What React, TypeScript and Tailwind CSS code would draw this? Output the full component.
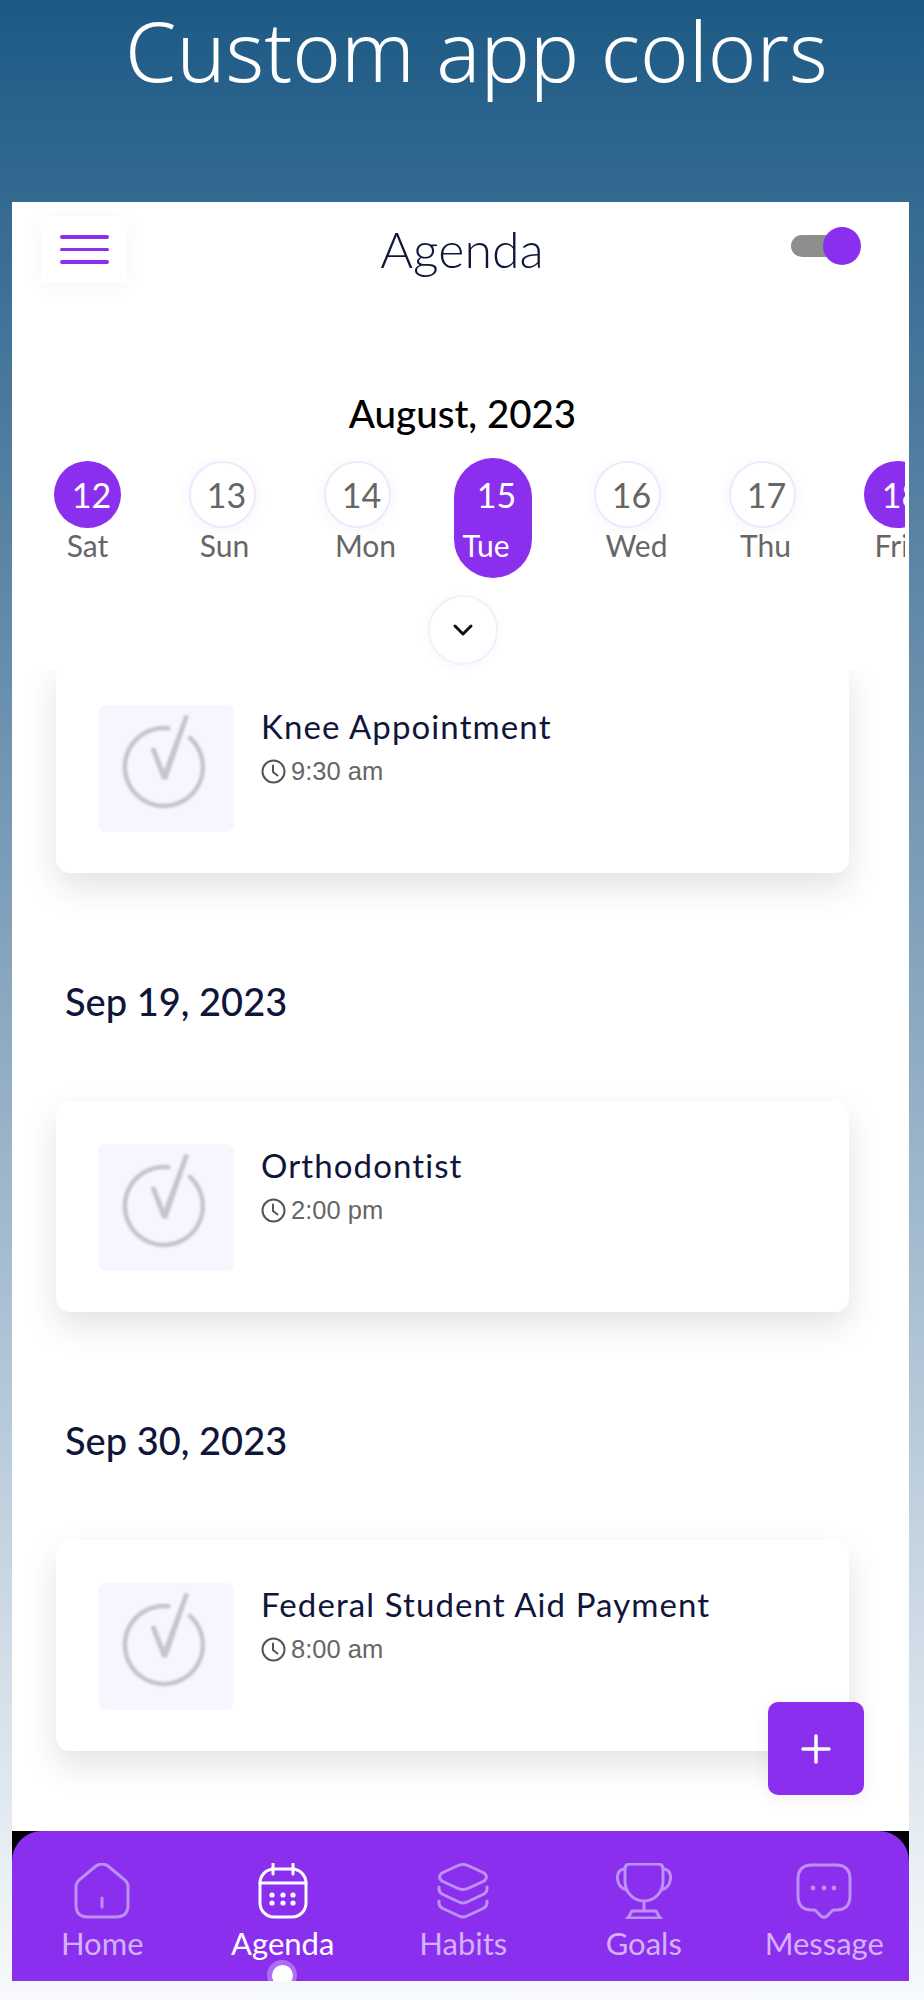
const days = [
  { num: "12", label: "Sat", filled: true, labelClass: "pl-0" },
  { num: "13", label: "Sun", filled: false, labelClass: "pl-[4px]" },
  { num: "14", label: "Mon", filled: false, labelClass: "pl-[16px]" },
  { num: "15", label: "Tue", filled: true, pill: true, labelClass: "pr-[13px]" },
  { num: "16", label: "Wed", filled: false, labelClass: "pl-[18px]" },
  { num: "17", label: "Thu", filled: false, labelClass: "pl-[6px]" },
  { num: "18", label: "Fri", filled: true, labelClass: "pr-[12px]" },
];

const agenda = [
  { title: "Orthodontist", time: "2:00 pm", date: "Sep 19, 2023" },
  { title: "Federal Student Aid Payment", time: "8:00 am", date: "Sep 30, 2023" },
];

function TaskIcon() {
  return (
    <div className="h-[127px] w-[136px] shrink-0 rounded-[8px] bg-[#f9f5fe] pl-[1px]">
      <svg width="134" height="127" viewBox="0 0 134 127" fill="none" className="blur-[0.8px]">
        <path d="M69.3 23.2A39 39 0 1 0 91 33" stroke="#c4c5cf" strokeWidth="4.500" strokeLinecap="round" />
        <path d="M54.5 45 65 72" stroke="#c4c5cf" strokeWidth="5" strokeLinecap="round" />
        <path d="M62 73 85.5 10 90 11 68 75Z" fill="#c4c5cf" />
      </svg>
    </div>
  );
}

function ClockIcon() {
  return (
    <svg width="25" height="25" viewBox="0 0 25 25" fill="none" stroke="#555" strokeWidth="2" strokeLinecap="round" className="shrink-0">
      <circle cx="12.5" cy="12.5" r="11" />
      <path d="M12 6.5V13l4.5 3.5" />
    </svg>
  );
}

function TaskCard({ title, time, className = "" }: { title: string; time: string; className?: string }) {
  return (
    <div className={`flex h-[211px] w-[793px] gap-[27px] rounded-[14px] bg-white pl-[42px] pt-[43px] shadow-[0_14px_32px_rgba(40,40,60,0.13)] ${className}`}>
      <TaskIcon />
      <div>
        <div className="-mt-[1px] font-['Lato',sans-serif] text-[33px] leading-[44px] tracking-[1.100px] text-[#10163a]">{title}</div>
        <div className="mt-[8px] flex items-center gap-[5px] font-['Liberation_Sans',sans-serif] text-[25.500px] leading-[30px] text-[#666]">
          <ClockIcon />
          {time}
        </div>
      </div>
    </div>
  );
}

function HomeIcon() {
  return (
    <svg width="56" height="56" viewBox="0 0 56 56" fill="none" stroke="currentColor" strokeWidth="3" strokeLinecap="round">
      <path d="M2 24Q2 20 5 17L22 3Q28-1 34 3L51 17Q54 20 54 24V42Q54 54 42 54H14Q2 54 2 42Z" />
      <path d="M28 35V44" />
    </svg>
  );
}

function CalendarIcon() {
  return (
    <svg width="52" height="56" viewBox="0 0 52 56" fill="none" stroke="currentColor" strokeWidth="3" strokeLinecap="round">
      <rect x="3" y="6" width="46" height="48" rx="14" />
      <path d="M3 20H49M16 1V11M36 1V11" />
      <g fill="currentColor" stroke="none">
        <circle cx="15" cy="32" r="2.6" />
        <circle cx="26" cy="32" r="2.6" />
        <circle cx="36" cy="32" r="2.6" />
        <circle cx="15" cy="40" r="2.6" />
        <circle cx="26" cy="40" r="2.6" />
        <circle cx="36" cy="40" r="2.6" />
      </g>
    </svg>
  );
}

function LayersIcon() {
  return (
    <svg width="52" height="56" viewBox="0 0 52 56" fill="none" stroke="currentColor" strokeWidth="3" strokeLinecap="round">
      <path d="M5 10 20 3Q26 0 32 3L47 10Q52 14 47 18L32 25Q26 28 20 25L5 18Q0 14 5 10Z" />
      <path d="M2 24V26Q2 29 5 31L22 39Q26 41 30 39L47 31Q50 29 50 26V24" />
      <path d="M2 38V40Q2 43 5 45L22 53Q26 55 30 53L47 45Q50 43 50 40V38" />
    </svg>
  );
}

function TrophyIcon() {
  return (
    <svg width="56" height="56" viewBox="0 0 56 56" fill="none" stroke="currentColor" strokeWidth="3" strokeLinecap="round">
      <path d="M9 6Q9 1 14 1H42Q47 1 47 6V18C47 30 38 38 28 38C18 38 9 30 9 18Z" />
      <path d="M9 6C3 6 1 11 1.500 16C2 22 6 26 11 27M47 6C53 6 55 11 54.500 16C54 22 50 26 45 27" />
      <path d="M28 38V47M12 55 16 48H40L44 55M11 55H45" />
    </svg>
  );
}

function MessageIcon() {
  return (
    <svg width="56" height="56" viewBox="0 0 56 56" fill="none" stroke="currentColor" strokeWidth="3" strokeLinecap="round" strokeLinejoin="round">
      <path d="M16 2H40Q54 2 54 16V33Q54 47 40 47H37L31 53Q28 55.500 25 53L19 47H16Q2 47 2 33V16Q2 2 16 2Z" />
      <g fill="currentColor" stroke="none">
        <circle cx="17" cy="25" r="2.4" />
        <circle cx="28" cy="25" r="2.4" />
        <circle cx="38" cy="25" r="2.4" />
      </g>
    </svg>
  );
}

const navItems = [
  { label: "Home", icon: <HomeIcon /> },
  { label: "Agenda", icon: <CalendarIcon />, active: true },
  { label: "Habits", icon: <LayersIcon /> },
  { label: "Goals", icon: <TrophyIcon /> },
  { label: "Message", icon: <MessageIcon /> },
];

export default function App() {
  return (
    <div className="h-[2000px] w-[924px] overflow-hidden bg-gradient-to-b from-[#1b5a85] to-[#f8fafc] pl-[12px]">
      <h1 className="h-[202px] whitespace-nowrap pl-[113px] font-['Noto_Sans',sans-serif] text-[82.500px] font-light leading-[100px] text-white">Custom app colors</h1>

      <div className="relative flex h-[1779px] w-[897px] flex-col overflow-hidden bg-white">
        {/* top area stays above the scrolling list */}
        <div className="relative z-10 h-[468px] shrink-0 bg-white">
          <div className="relative h-[108px]">
            <div className="absolute left-[29px] top-[14px] flex h-[67px] w-[86px] flex-col items-center justify-center gap-[9px] bg-white shadow-[0_4px_18px_rgba(60,60,80,0.05)]">
              <span className="h-[3.500px] w-[49px] rounded-full bg-[#8b2fee]" />
              <span className="h-[3.500px] w-[49px] rounded-full bg-[#8b2fee]" />
              <span className="h-[3.500px] w-[49px] rounded-full bg-[#8b2fee]" />
            </div>
            <div className="pl-[3px] pt-[20px] text-center font-['Lato',sans-serif] text-[50px] font-light leading-[54px] text-[#10163a]">Agenda</div>
            <div className="absolute right-[48px] top-[25px] flex items-center">
              <span className="h-[22px] w-[48px] rounded-full bg-[#8e8e8e]" />
              <span className="-ml-[16px] h-[38px] w-[38px] rounded-full bg-[#8b2fee]" />
            </div>
          </div>

          <div className="pl-[4px] pt-[81px] text-center font-['Lato',sans-serif] text-[38.500px] font-medium leading-[44px] text-black">August, 2023</div>

          <div className="mr-[4px] mt-[23px] flex h-[120px] overflow-hidden pl-[8px]">
            {days.map((d) => (
              <div key={d.num} className="flex w-[135px] shrink-0 flex-col items-center">
                <div className={`flex w-[67px] flex-col items-center ${d.pill ? "h-[120px] w-[78px] rounded-full bg-[#8b2fee] text-white" : ""}`}>
                  <div
                    className={`mt-[3px] flex h-[67px] w-[67px] shrink-0 items-center justify-center rounded-full pl-[8px] font-['Lato',sans-serif] text-[34px] ${
                      d.filled ? "bg-[#8b2fee] text-white" : "border-2 border-[#efe9fd] bg-white text-[#666] shadow-[0_2px_14px_rgba(90,60,160,0.06)]"
                    }`}
                  >
                    {d.num}
                  </div>
                  <div className={`-mt-[1px] whitespace-nowrap font-['Lato',sans-serif] text-[30px] leading-[36px] ${d.labelClass} ${d.pill ? "text-white" : "text-[#666]"}`}>
                    {d.label}
                  </div>
                </div>
              </div>
            ))}
          </div>

          <div className="mt-[17px] flex justify-center pl-[4px]">
            <div className="flex h-[70px] w-[70px] items-center justify-center rounded-full border-2 border-[#f4effd] bg-white shadow-[0_2px_10px_rgba(90,60,160,0.05)]">
              <svg width="22" height="14" viewBox="0 0 22 14" fill="none" stroke="#111" strokeWidth="3" strokeLinecap="round" strokeLinejoin="round">
                <path d="M3 3l8 8 8-8" />
              </svg>
            </div>
          </div>
        </div>

        <div className="min-h-0 flex-1 overflow-hidden pl-[44px]">
          <TaskCard title="Knee Appointment" time="9:30 am" className="-mt-[8px]" />
          {agenda.map((item) => (
            <div key={item.title}>
              <div className="mb-[80px] mt-[108px] pl-[9px] font-['Lato',sans-serif] text-[38px] font-medium leading-[40px] text-[#10163a]">{item.date}</div>
              <TaskCard title={item.title} time={item.time} />
            </div>
          ))}
        </div>

        <div className="absolute bottom-[186px] right-[45px] z-20 flex h-[93px] w-[96px] items-center justify-center rounded-[10px] bg-[#8b2fee] shadow-[0_4px_16px_rgba(60,60,80,0.08)]">
          <svg width="30" height="30" viewBox="0 0 30 30" stroke="#fff" strokeWidth="3.500" strokeLinecap="round">
            <path d="M15 2V28M2 15H28" />
          </svg>
        </div>

        <div className="h-[150px] shrink-0 bg-black">
          <div className="relative flex h-full overflow-hidden rounded-t-[30px] bg-[#8b2fee] pt-[32px]">
            {navItems.map((item) => (
              <div key={item.label} className={`flex w-[180.500px] shrink-0 flex-col items-center ${item.active ? "text-white" : "text-[#bc90f5]"}`}>
                {item.icon}
                <span className={`mt-[6px] font-['Lato',sans-serif] text-[31px] leading-[36px] ${item.active ? "text-white" : "text-[#d3b1f8]"}`}>{item.label}</span>
              </div>
            ))}
            <span className="absolute bottom-[-9px] left-[255px] flex h-[30px] w-[30px] items-center justify-center rounded-full bg-white/30">
              <span className="h-[21px] w-[21px] rounded-full bg-white" />
            </span>
          </div>
        </div>
      </div>
    </div>
  );
}
